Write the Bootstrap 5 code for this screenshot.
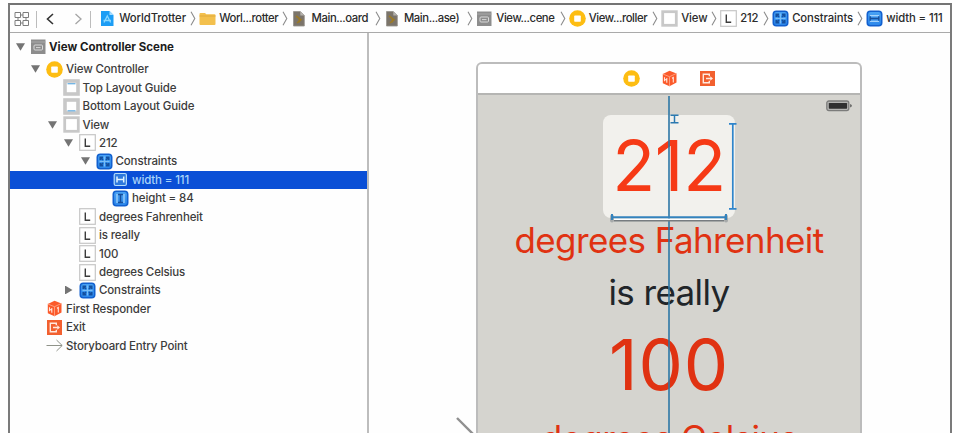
<!DOCTYPE html>
<html lang="en">
<head>
<meta charset="utf-8">
<meta name="viewport" content="width=device-width, initial-scale=1">
<title>WorldTrotter — Storyboard</title>
<link href="https://cdn.jsdelivr.net/npm/bootstrap@5.3.0/dist/css/bootstrap.min.css" rel="stylesheet">
<style>
body{width:956px;height:433px;overflow:hidden;background:#fff;font-family:Inter,"Liberation Sans",sans-serif;color:#303030}
svg{display:block;flex:none;overflow:visible}
.window{margin:3px 4px 0 8px;height:430px;overflow:hidden;border:2px solid #7b7b7b;border-bottom:0;border-top-color:#747474;background:#fefefe}
.jumpbar{height:28px;border-bottom:1px solid #aaa;font-size:11.3px;font-weight:500;line-height:1;color:#2b2b2b;padding-left:5px;letter-spacing:-.1px}
.nav-tools{width:84px}
.crumb{height:100%;padding-right:3px;white-space:nowrap}
.crumb .ico,.tree-row .ico{width:17px;height:17px;margin-right:3.2px;flex:none}
.clipped{letter-spacing:-.42px}
.c92{width:92.4px}.c100{width:100px}.c59{width:59px}.c52{width:52px}.c94{width:94px}
.outline{width:359px;border-right:2px solid #bdbdbd;font-size:11.5px;font-weight:500;color:#3c3c3c;letter-spacing:-.14px}
.tree-row{height:18.45px;line-height:18px;white-space:nowrap}
.tree-row .ico{margin-right:3px}
.tree-row.scene-row{height:27px;font-weight:700;color:#1c1c1c;letter-spacing:0}
.scene-row .ico{margin-left:-1px;margin-right:2px}
.twist{width:9px;height:8px;margin-right:6px}
.l0{padding-left:6px}.l1{padding-left:21px}.l2{padding-left:37.5px}.l3{padding-left:54px}.l4{padding-left:70.5px}.l5{padding-left:87px}
.selected{background:#0a4fd6;color:#a9d4f8}
.canvas{padding-left:107px}
.phone{width:386px;height:371px;margin-top:29px;border:2px solid #bcbcbc;border-bottom:0;border-radius:6px 6px 0 0;background:#d5d4cf;overflow:hidden}
.dock{height:31px;background:#fff;border-bottom:2px solid #b5b5b3;gap:21px}
.battery{right:8px;top:36px}
.tile{width:132px;height:103px;border-radius:8px;background:#f2f1ed;margin-top:20px}
.red-label{color:#e03212;white-space:nowrap}
.big{font-size:70.5px;line-height:101px;letter-spacing:-.4px}
.tile .big{color:#f63a16}
.mid{font-size:35px;line-height:52px;letter-spacing:-.6px}
.first-label{margin-top:-4px}
.hundred{line-height:94px;letter-spacing:.8px}
.guides{left:0;top:0}
.arrow{left:447px;top:386px}
</style>
<script src="https://cdn.jsdelivr.net/npm/bootstrap@5.3.0/dist/js/bootstrap.bundle.min.js"></script>
</head>
<body>
<svg width="0" height="0" class="position-absolute">
<defs>
<linearGradient id="blueFill" x1="0" y1="0" x2="0" y2="1"><stop offset="0" stop-color="#4aa3f4"/><stop offset="1" stop-color="#2b86ea"/></linearGradient>
<symbol id="scene" viewBox="0 0 17 17"><rect x="1" y="1.500" width="14.500" height="14.500" fill="#8d8d8d"/><path d="M1 4h14.500" stroke="#a9a9a9"/><rect x="4" y="7" width="8.500" height="5" rx="1" fill="none" stroke="#d8d8d8"/><path d="M6 9.600h4.500" stroke="#d8d8d8"/></symbol>
<symbol id="vc" viewBox="0 0 17 17"><circle cx="8.500" cy="8.500" r="8.300" fill="#fdbd12"/><rect x="5.200" y="5.400" width="6.600" height="6.400" rx=".8" fill="#fff"/></symbol>
<symbol id="view" viewBox="0 0 17 17"><rect x="1.700" y="1.700" width="13.600" height="13.600" fill="#fff" stroke="#c8c8c8" stroke-width="2.800"/></symbol>
<symbol id="topg" viewBox="0 0 17 17"><rect x="2" y="2" width="13" height="13" fill="#fff" stroke="#c8c8c8" stroke-width="3.600"/><path d="M4.500 4.700h8" stroke="#6db2e3" stroke-width="1.300"/></symbol>
<symbol id="botg" viewBox="0 0 17 17"><rect x="2" y="2" width="13" height="13" fill="#fff" stroke="#c8c8c8" stroke-width="3.600"/><path d="M4.500 12.800h8" stroke="#6db2e3" stroke-width="1.300"/></symbol>
<symbol id="lab" viewBox="0 0 17 17"><rect x=".7" y=".7" width="15.600" height="15.600" fill="#fff" stroke="#c6c6c6" stroke-width="1.200"/><path d="M6.300 4.400v7.900h4.900" fill="none" stroke="#3c3c3c" stroke-width="1.400"/></symbol>
<symbol id="cons" viewBox="0 0 17 17"><rect x="1.300" y="1.300" width="14.400" height="14.400" rx="3" fill="url(#blueFill)" stroke="#1260cf" stroke-width="1.600"/><path d="M4.300 7V4.300H7M10 4.300h2.700V7M12.700 10v2.700H10M7 12.700H4.300V10" fill="none" stroke="#14509f" stroke-width="1.700"/><path d="M7 7l-1.800-1.800M10 7l1.800-1.800M10 10l1.800 1.800M7 10l-1.800 1.800" stroke="#14509f" stroke-width="1.700"/><path d="M8.500 3.500v10M3.500 8.500h10" stroke="#78bdf5" stroke-width="1"/></symbol>
<symbol id="wid" viewBox="0 0 17 17"><rect x="1.300" y="1.300" width="14.400" height="14.400" rx="3" fill="url(#blueFill)" stroke="#1260cf" stroke-width="1.600"/><path d="M4 5.700h9M4 11.300h9" stroke="#c6e7ff" stroke-width="1.100"/><path d="M4.200 6.200v4.600M12.800 6.200v4.600M4.200 8.500h8.600" stroke="#174f9c" stroke-width="1.400"/></symbol>
<symbol id="widsel" viewBox="0 0 17 17"><rect x="2.200" y="2.500" width="12.200" height="12" rx="1.500" fill="#2e79dd" stroke="#b4dcfa" stroke-width="1.200"/><path d="M5 5.500v6M11.700 5.500v6M5 8.500h6.700" stroke="#e2f3ff" stroke-width="1.500" fill="none"/></symbol>
<symbol id="hei" viewBox="0 0 17 17"><rect x="1.300" y="1.300" width="14.400" height="14.400" rx="3" fill="url(#blueFill)" stroke="#1260cf" stroke-width="1.600"/><path d="M5 4v9M12 4v9" stroke="#b5defd" stroke-width="1.100"/><path d="M6 4.400h5M6 12.600h5M8.500 4.400v8.200" stroke="#174f9c" stroke-width="1.500"/></symbol>
<symbol id="cube" viewBox="0 0 17 17"><path d="M8.500.8l7 2.600v9.200l-7 3.700-6.700-3V4z" fill="#fb5a2b"/><path d="M1.800 4l6.700 2.700 7-3.300M8.500 6.700v9.600" stroke="#ffad8f" stroke-width=".8" fill="none"/><path d="M3.500 7.200v4M5.800 8.100v4.600M3.500 9.300l2.300.9M11 8.300l1.300-.8v5" stroke="#ffe6dc" stroke-width="1.100" fill="none"/></symbol>
<symbol id="exit" viewBox="0 0 17 17"><rect x="1" y="1" width="15" height="15" fill="#f2602f"/><path d="M10.300 6.200V4.200H4.300v8.600h6v-2M7 8.500h5" fill="none" stroke="#ffe9df" stroke-width="1.400"/><path d="M11.300 6.200v4.600L14 8.500z" fill="#ffe9df"/></symbol>
<symbol id="proj" viewBox="0 0 17 17"><path d="M2 1h8.500L14.500 5v11H2z" fill="#1c9df5"/><path d="M10.500 1v4h4z" fill="#a5dcff"/><path d="M5 12.500l3.300-6.500 3.300 6.500M4.500 10.500h7.500" fill="none" stroke="#8ad8ff" stroke-width="1.300"/></symbol>
<symbol id="folder" viewBox="0 0 17 17"><path d="M.5 4Q.5 3 1.500 3H6l1.300 1.300h8.200q1 0 1 1V14q0 1-1 1h-14q-1 0-1-1z" fill="#f3c04d"/><path d="M.5 6h16" stroke="#dfa83a" stroke-width=".9"/></symbol>
<symbol id="doc" viewBox="0 0 17 17"><path d="M2.500 1.500h6.800l4 4V16H2.500z" fill="#7b746a" stroke="#96928b" stroke-width=".8"/><path d="M9.300 1.500v4h4z" fill="#b5b2ad"/><path d="M5 6l5 3.700L6 13M8.300 8v4.500" fill="none" stroke="#9c7a26" stroke-width="1.600"/></symbol>
<symbol id="sep" viewBox="0 0 6 15"><path d="M1 .8l3.800 6.700L1 14.200" fill="none" stroke="#8c8c8c" stroke-width="1.100"/></symbol>
<symbol id="down" viewBox="0 0 9 8"><path d="M0 .3h9L4.500 7.800z" fill="#747474"/></symbol>
<symbol id="right" viewBox="0 0 9 8"><path d="M1-.5v9L8.500 4z" fill="#747474"/></symbol>
</defs>
</svg>
<div class="window position-relative">
  <div class="jumpbar d-flex align-items-center">
    <svg class="nav-tools" height="20" viewBox="0 0 84 20"><g fill="none" stroke="#7d7d7d" stroke-width="1"><path d="M0 4.500h5.500v5H0zM8 4.500h5.500v5H8zM0 12.500h5.500v5H0zM8 12.500h5.500v5H8zM5.500 7H8M5.500 15H8M3 9.500v3M11 9.500v3" transform="translate(0 -1)"/><path d="M21.500 2v17M75.500 2v17" stroke="#bcbcbc"/><path d="M38 5l-5.500 5 5.500 5" stroke="#333" stroke-width="1.600"/><path d="M60.500 5l5.500 5-5.500 5" stroke="#a5a5a5" stroke-width="1.300"/></g></svg>
    <div class="crumb c100 d-flex align-items-center"><svg class="ico"><use href="#proj"/></svg><span>WorldTrotter</span><svg class="ms-auto" width="6" height="15"><use href="#sep"/></svg></div>
    <div class="crumb c92 d-flex align-items-center"><svg class="ico"><use href="#folder"/></svg><span class="clipped">Worl...rotter</span><svg class="ms-auto" width="6" height="15"><use href="#sep"/></svg></div>
    <div class="crumb c92 d-flex align-items-center"><svg class="ico"><use href="#doc"/></svg><span class="clipped">Main...oard</span><svg class="ms-auto" width="6" height="15"><use href="#sep"/></svg></div>
    <div class="crumb c92 d-flex align-items-center"><svg class="ico"><use href="#doc"/></svg><span class="clipped">Main...ase)</span><svg class="ms-auto" width="6" height="15"><use href="#sep"/></svg></div>
    <div class="crumb c92 d-flex align-items-center"><svg class="ico"><use href="#scene"/></svg><span class="clipped">View...cene</span><svg class="ms-auto" width="6" height="15"><use href="#sep"/></svg></div>
    <div class="crumb c92 d-flex align-items-center"><svg class="ico"><use href="#vc"/></svg><span class="clipped">View...roller</span><svg class="ms-auto" width="6" height="15"><use href="#sep"/></svg></div>
    <div class="crumb c59 d-flex align-items-center"><svg class="ico"><use href="#view"/></svg><span>View</span><svg class="ms-auto" width="6" height="15"><use href="#sep"/></svg></div>
    <div class="crumb c52 d-flex align-items-center"><svg class="ico"><use href="#lab"/></svg><span>212</span><svg class="ms-auto" width="6" height="15"><use href="#sep"/></svg></div>
    <div class="crumb c94 d-flex align-items-center"><svg class="ico"><use href="#cons"/></svg><span>Constraints</span><svg class="ms-auto" width="6" height="15"><use href="#sep"/></svg></div>
    <div class="crumb d-flex align-items-center"><svg class="ico"><use href="#wid"/></svg><span>width = 111</span></div>
  </div>
  <div class="d-flex">
    <div class="outline flex-shrink-0">
      <div class="tree-row scene-row l0 d-flex align-items-center"><svg class="twist"><use href="#down"/></svg><svg class="ico"><use href="#scene"/></svg><span>View Controller Scene</span></div>
      <div class="tree-row l1 d-flex align-items-center"><svg class="twist"><use href="#down"/></svg><svg class="ico"><use href="#vc"/></svg><span>View Controller</span></div>
      <div class="tree-row l2 d-flex align-items-center"><span class="twist"></span><svg class="ico"><use href="#topg"/></svg><span>Top Layout Guide</span></div>
      <div class="tree-row l2 d-flex align-items-center"><span class="twist"></span><svg class="ico"><use href="#botg"/></svg><span>Bottom Layout Guide</span></div>
      <div class="tree-row l2 d-flex align-items-center"><svg class="twist"><use href="#down"/></svg><svg class="ico"><use href="#view"/></svg><span>View</span></div>
      <div class="tree-row l3 d-flex align-items-center"><svg class="twist"><use href="#down"/></svg><svg class="ico"><use href="#lab"/></svg><span>212</span></div>
      <div class="tree-row l4 d-flex align-items-center"><svg class="twist"><use href="#down"/></svg><svg class="ico"><use href="#cons"/></svg><span>Constraints</span></div>
      <div class="tree-row l5 selected d-flex align-items-center"><span class="twist"></span><svg class="ico"><use href="#widsel"/></svg><span>width = 111</span></div>
      <div class="tree-row l5 d-flex align-items-center"><span class="twist"></span><svg class="ico"><use href="#hei"/></svg><span>height = 84</span></div>
      <div class="tree-row l3 d-flex align-items-center"><span class="twist"></span><svg class="ico"><use href="#lab"/></svg><span>degrees Fahrenheit</span></div>
      <div class="tree-row l3 d-flex align-items-center"><span class="twist"></span><svg class="ico"><use href="#lab"/></svg><span>is really</span></div>
      <div class="tree-row l3 d-flex align-items-center"><span class="twist"></span><svg class="ico"><use href="#lab"/></svg><span>100</span></div>
      <div class="tree-row l3 d-flex align-items-center"><span class="twist"></span><svg class="ico"><use href="#lab"/></svg><span>degrees Celsius</span></div>
      <div class="tree-row l3 d-flex align-items-center"><svg class="twist"><use href="#right"/></svg><svg class="ico"><use href="#cons"/></svg><span>Constraints</span></div>
      <div class="tree-row l1 d-flex align-items-center"><span class="twist"></span><svg class="ico"><use href="#cube"/></svg><span>First Responder</span></div>
      <div class="tree-row l1 d-flex align-items-center"><span class="twist"></span><svg class="ico"><use href="#exit"/></svg><span>Exit</span></div>
      <div class="tree-row l1 d-flex align-items-center"><span class="twist"></span><svg class="ico" viewBox="0 0 17 17"><path d="M.5 8.500h15.500M10.500 3l5.700 5.500-5.700 5.500" fill="none" stroke="#8f9389" stroke-width="1"/></svg><span>Storyboard Entry Point</span></div>
    </div>
    <div class="canvas flex-grow-1">
      <div class="phone position-relative d-flex flex-column">
        <div class="dock flex-shrink-0 d-flex align-items-center justify-content-center"><svg width="17" height="17"><use href="#vc"/></svg><svg width="17" height="17"><use href="#cube"/></svg><svg width="17" height="17"><use href="#exit"/></svg></div>
        <svg class="battery position-absolute" width="26" height="12"><rect x=".8" y="1" width="22" height="9.600" rx="2" fill="#b4b4b2" stroke="#7c7c7b" stroke-width="1.300"/><rect x="2.800" y="2.900" width="18.300" height="5.800" rx=".6" fill="#303030"/><path d="M24.300 4v3.600q1.400-.5 1.400-1.800T24.300 4" fill="#444"/></svg>
        <div class="tile flex-shrink-0 align-self-center text-center"><div class="red-label big">212</div></div>
        <div class="red-label mid first-label flex-shrink-0 text-center">degrees Fahrenheit</div>
        <div class="red-label mid flex-shrink-0 text-center text-dark">is really</div>
        <div class="red-label big hundred flex-shrink-0 text-center">100</div>
        <div class="red-label mid flex-shrink-0 text-center">degrees Celsius</div>
        <svg class="guides position-absolute" width="382" height="371"><path d="M191 32v340" stroke="#2c77a5" stroke-width="1.600"/><g fill="none"><path d="M192.500 51.300h8M192.500 58.700h8M196.500 51.300v7.400" stroke="#2b79b0" stroke-width="1.500"/><path d="M251 59.800h7.500M251 144.800h7.500M254.800 59.800v85" stroke="#2f85cb" stroke-width="1.700"/><path d="M134 152.500v4M248 152.500v4" stroke="#8f9396" stroke-width="4" stroke-linecap="round" opacity=".65"/><path d="M136 155.300h110" stroke="#fff" stroke-width="1.500"/><path d="M136 156.700h110" stroke="#777c80" stroke-width="1.500"/><path d="M134 153.200h114M134 150v6M248 150v6" stroke="#3483bd" stroke-width="2"/></g></svg>
      </div>
    </div>
  </div>
  <svg class="arrow position-absolute" width="30" height="30"><path d="M0 27l17 17" stroke="#909090" stroke-width="2.400"/></svg>
</div>
</body>
</html>
